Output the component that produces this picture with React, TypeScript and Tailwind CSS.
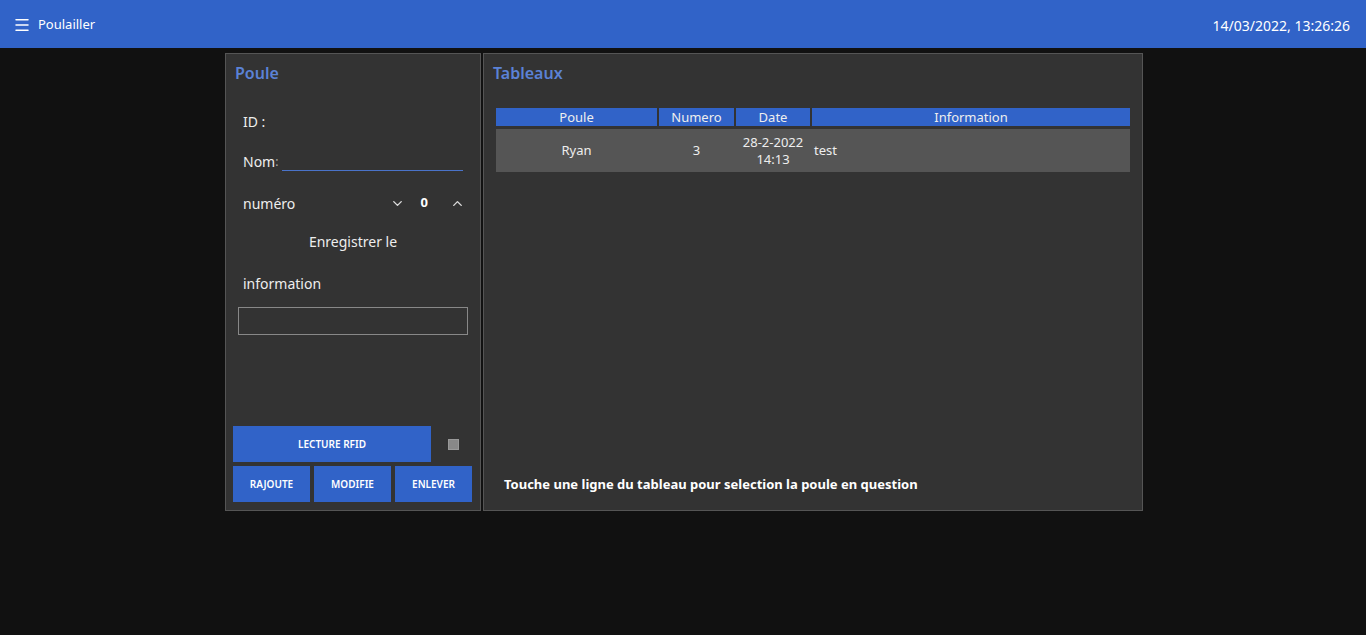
import { Menu, ChevronDown, ChevronUp } from "lucide-react";

type Row = { poule: string; numero: number; date: string; heure: string; info: string };

const rows: Row[] = [{ poule: "Ryan", numero: 3, date: "28-2-2022", heure: "14:13", info: "test" }];

function PoulePanel() {
    return (
        <div className="w-[256px] h-[458px] bg-[#333333] border border-[#555555] flex flex-col px-[7px] pt-[9px] pb-[8px]">
            <h2 className="text-[#5b82d6] text-[16px] font-semibold ml-[2px] leading-[20px]">Poule</h2>
            <div className="flex flex-col px-[10px] text-[14px] text-[#eeeeee]">
                <div className="mt-[29px] h-[20px] leading-[20px]">ID :</div>
                <div className="mt-[20px] flex items-end h-[20px]">
                    <span className="leading-[20px]">Nom</span>
                    <span className="text-[12px] text-[#aaaaaa] leading-[20px]">:</span>
                    <div className="flex-1 ml-[4px] mb-[1px] border-b border-[#4a73c9] h-[10px]"></div>
                </div>
                <div className="mt-[21px] flex items-center h-[20px]">
                    <span className="flex-1">numéro</span>
                    <ChevronDown size={15} strokeWidth={2.25} className="text-[#dddddd] mr-[16px]" />
                    <span className="font-bold text-white text-[13px] mr-[22px]">0</span>
                    <ChevronUp size={15} strokeWidth={2.25} className="text-[#dddddd] mr-[-2px]" />
                </div>
                <div className="mt-[19px] h-[20px] leading-[20px] text-center">Enregistrer le</div>
                <div className="mt-[22px] h-[20px] leading-[20px]">information</div>
            </div>
            <div className="mt-[13px] mx-[5px] h-[28px] border border-[#888888]"></div>
            <div className="flex-1"></div>
            <div className="flex items-center">
                <button className="w-[198px] h-[36px] bg-[#3163c8] text-white text-[10px] font-semibold">LECTURE RFID</button>
                <div className="ml-[17px] w-[11px] h-[11px] bg-[#888888] border border-[#999999]"></div>
            </div>
            <div className="flex gap-[4px] mt-[4px]">
                <button className="w-[77px] h-[36px] bg-[#3163c8] text-white text-[10px] font-semibold">RAJOUTE</button>
                <button className="w-[77px] h-[36px] bg-[#3163c8] text-white text-[10px] font-semibold">MODIFIE</button>
                <button className="w-[77px] h-[36px] bg-[#3163c8] text-white text-[10px] font-semibold">ENLEVER</button>
            </div>
        </div>
    );
}

function TableauPanel() {
    return (
        <div className="w-[660px] h-[458px] bg-[#333333] border border-[#555555] flex flex-col px-[12px] pt-[9px] pb-[16px]">
            <h2 className="text-[#5b82d6] text-[16px] font-semibold -ml-[3px] leading-[20px]">Tableaux</h2>
            <div className="mt-[25px] flex gap-[2px] text-[13px] text-[#eeeeee] h-[18px] leading-[18px] w-[634px]">
                <div className="w-[161px] bg-[#3163c8] text-center">Poule</div>
                <div className="w-[75px] bg-[#3163c8] text-center">Numero</div>
                <div className="w-[74px] bg-[#3163c8] text-center">Date</div>
                <div className="flex-1 bg-[#3163c8] text-center">Information</div>
            </div>
            {rows.map((r) => (
                <div key={r.poule} className="mt-[3px] flex gap-[2px] h-[43px] bg-[#555555] text-[13px] text-[#eeeeee] items-center w-[634px]">
                    <div className="w-[161px] text-center pt-[1px]">{r.poule}</div>
                    <div className="w-[75px] text-center pt-[1px]">{r.numero}</div>
                    <div className="w-[74px] text-center leading-[17px]">
                        {r.date}
                        <br />
                        {r.heure}
                    </div>
                    <div className="flex-1 pl-[2px] pt-[1px]">{r.info}</div>
                </div>
            ))}
            <div className="flex-1"></div>
            <p className="ml-[8px] text-[13px] font-bold text-white">Touche une ligne du tableau pour selection la poule en question</p>
        </div>
    );
}

export default function App() {
    return (
        <div className="min-h-[635px] bg-[#111111]" style={{ fontFamily: '"Noto Sans", "Open Sans", sans-serif' }}>
            <header className="h-[48px] bg-[#3163c8] flex items-center justify-between pl-[13px] pr-[16px] pt-[2px] text-white">
                <div className="flex items-center gap-[7px]">
                    <Menu size={18} strokeWidth={2} />
                    <span className="text-[13px]">Poulailler</span>
                </div>
                <span className="text-[14px]">14/03/2022, 13:26:26</span>
            </header>
            <main className="flex justify-center gap-[2px] pt-[5px] pl-[2px]">
                <PoulePanel />
                <TableauPanel />
            </main>
        </div>
    );
}
